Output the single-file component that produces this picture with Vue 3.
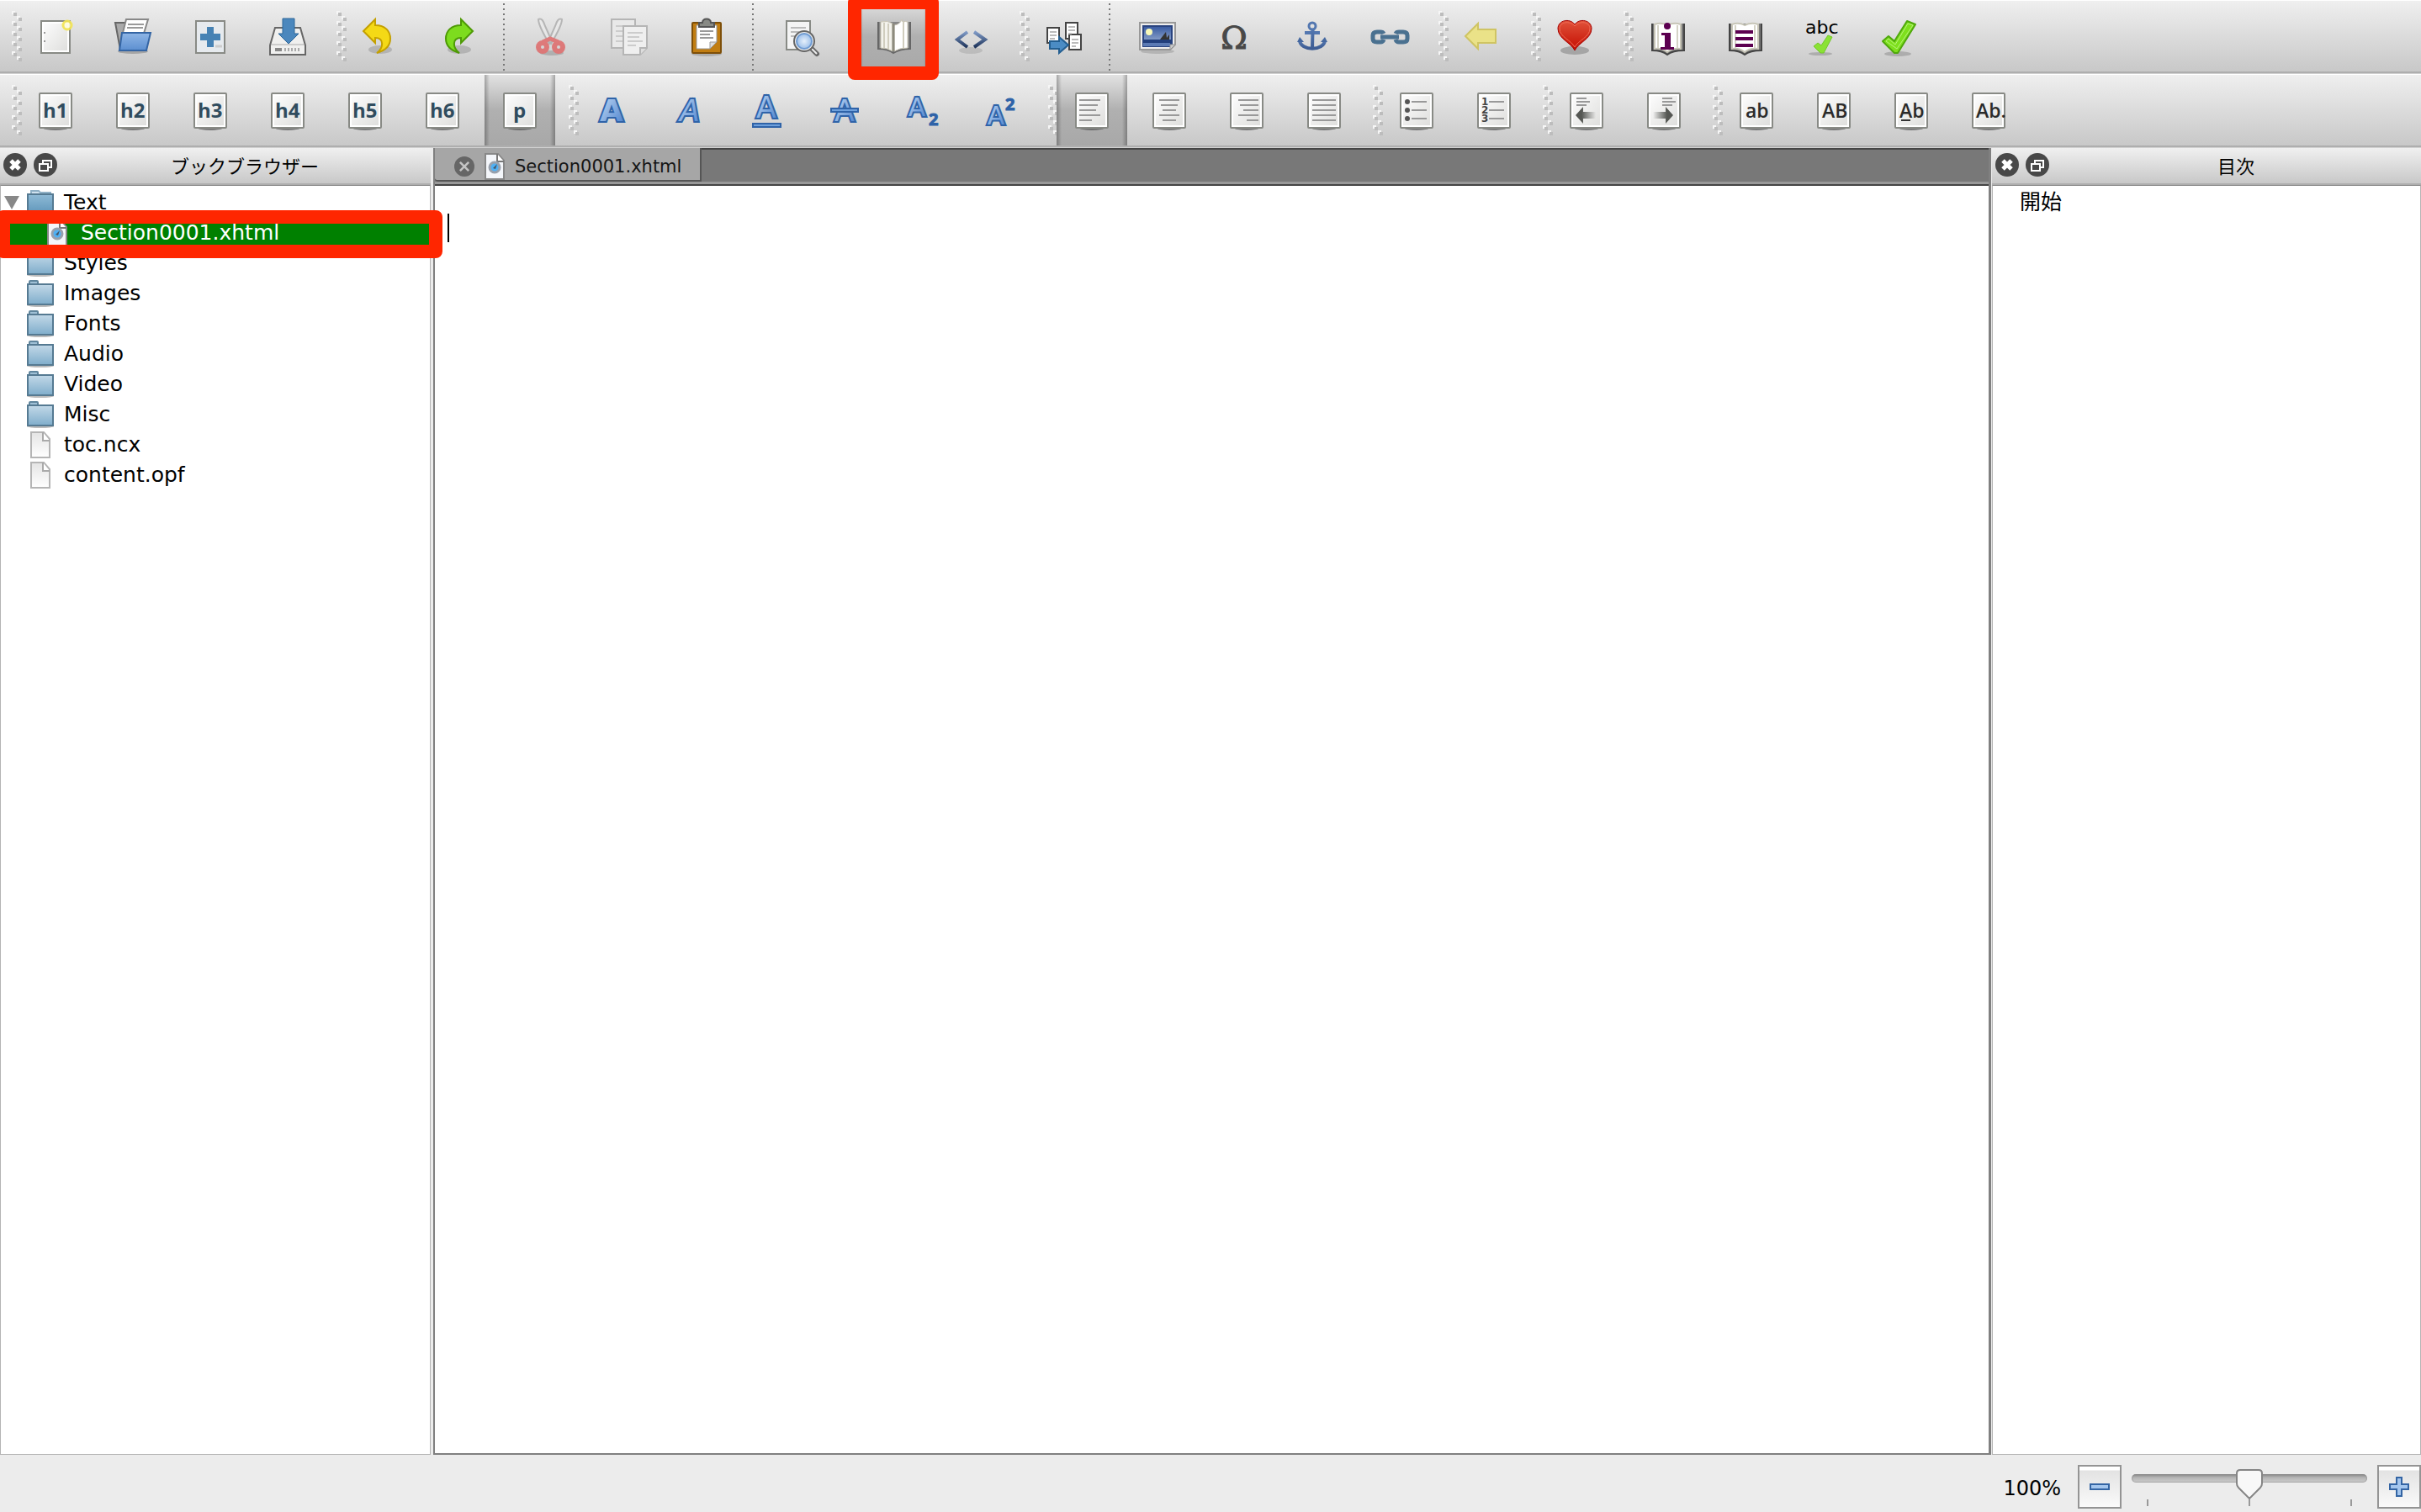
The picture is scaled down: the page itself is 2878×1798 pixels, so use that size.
<script setup>
import { ref } from 'vue'

const zoom = ref(50)

const page = '<ellipse cx="24" cy="44" rx="15" ry="3" fill="#555" opacity=".7"/><rect x="5" y="3" width="38" height="41" rx="1" fill="#fff" stroke="#888a85" stroke-width="2"/><rect x="8" y="6" width="32" height="35" fill="url(#paper)"/>'
const heading = (t, x) => `${page}<text x="${x}" y="32" class="h">${t}</text>`
const lines = (list) => list.map(([x, y, w]) => `<rect x="${x}" y="${y}" width="${w}" height="2" fill="#999"/>`).join('')
const caseMark = (t, x) => `${page}<text x="${x}" y="32" class="c">${t}</text>`
const letter = (x, y, s, extra = '') => `<text x="${x}" y="${y}" font-size="${s}" class="a" ${extra}>A</text>`
const tick = 'M4 29l7-6 7 6L33 5l10 4L22 43h-4z'
const book = '<path d="M6 8v32q12 0 18 5q6-5 20-5V8" fill="#777" stroke="#444" stroke-width="2"/><path d="M9 9q8-3 15 1q8-4 16-1v29q-10-1-16 4q-6-5-15-4z" fill="#fff" stroke="#c8c6b8" stroke-width="2"/><path d="M13 10v27M36 10v27" stroke="#d5d3c6" stroke-width="2"/>'

const icons = {
  new: '<rect x="7" y="5" width="34" height="38" fill="#fff" stroke="#888a85" stroke-width="2"/><rect x="10" y="8" width="28" height="32" fill="url(#paper)"/><path d="M10 19h2M10 29h2" stroke="#999" stroke-width="2"/><circle cx="38" cy="10" r="5" fill="#fffde0" stroke="#f3e552" stroke-width="3" opacity=".9"/>',
  open: '<ellipse cx="24" cy="41" rx="18" ry="3" fill="#777" opacity=".5"/><path d="M3 7h12v32H9z" fill="#aaa" stroke="#666" stroke-width="2"/><path d="M16 3h26l-6 20H11z" fill="#fff" stroke="#888" stroke-width="2"/><path d="M18 9h19M17 13h19" stroke="#999" stroke-width="2"/><path d="M11 19h34l-5 21H8z" fill="url(#blue)" stroke="#3465a4" stroke-width="2"/>',
  add: '<rect x="7" y="5" width="34" height="38" fill="#e6eaee" stroke="#888a85" stroke-width="2"/><path d="M30 35h8" stroke="#ccc" stroke-width="3"/><path d="M20 12h8v8h8v8h-8v8h-8v-8h-8v-8h8z" fill="#4682b4"/>',
  save: '<path d="M9 13h30l6 21v11H3V34z" fill="#f0f0ef" stroke="#666" stroke-width="2"/><path d="M4 33h40" stroke="#aaa" stroke-width="1"/><path d="M9 39h8" stroke="#888" stroke-width="4"/><path d="M20 39h20" stroke="#aaa" stroke-width="4" stroke-dasharray="2 2"/><path d="M18 2h14v18h5L25 32 13 20h5z" fill="#4b87bd" stroke="#2d6699" stroke-width="1"/>',
  undo: '<ellipse cx="24" cy="39" rx="14" ry="5" fill="#777" opacity=".35"/><path d="M4 17L18 3v7c12 0 18 7 18 16 0 8-6 14-16 17 8-6 9-18-2-18v6z" fill="#f4d916" stroke="#c4a000" stroke-width="2"/>',
  redo: '<ellipse cx="26" cy="39" rx="14" ry="5" fill="#777" opacity=".35"/><path d="M42 17L28 3v7c-12 0-18 7-18 16 0 8 6 14 16 17-8-6-9-18 2-18v6z" fill="#7ddc1e" stroke="#4e9a06" stroke-width="2"/>',
  cut: '<g opacity=".6"><ellipse cx="24" cy="43" rx="14" ry="3" fill="#999"/><path d="M8 3c4-2 6 2 8 8l8 18-3 3C15 22 8 10 8 3zM36 3c-4-2-6 2-8 8l-8 18 3 3C29 22 36 10 36 3z" fill="#eee" stroke="#999" stroke-width="2"/><ellipse cx="13" cy="36" rx="5" ry="5" fill="none" stroke="#e23c3c" stroke-width="6"/><ellipse cx="32" cy="36" rx="5" ry="5" fill="none" stroke="#e23c3c" stroke-width="6"/><path d="M13 30l9-4 10 4" fill="none" stroke="#e23c3c" stroke-width="5"/></g>',
  copy: '<g stroke="#b5b5b5" stroke-width="2" fill="#e9e9e9"><path d="M3 3h28v34H3z"/><path d="M8 11h14M8 17h8M8 23h8M8 29h8" stroke="#ccc"/><path d="M17 11h28v26l-8 8H17z" fill="#efefef"/><path d="M45 37h-8v8" fill="#ddd"/><path d="M22 19h18M22 24h14M22 29h18M22 34h10" stroke="#ccc"/></g>',
  paste: '<ellipse cx="24" cy="44" rx="18" ry="3" fill="#777" opacity=".4"/><rect x="7" y="7" width="34" height="36" rx="1" fill="#c17d11" stroke="#7e4f08" stroke-width="2"/><path d="M12 10h24v20l-8 8H12z" fill="#fff" stroke="#999"/><path d="M36 30l-8 0v8z" fill="#ddd" stroke="#999"/><path d="M16 17h16M16 21h12M16 25h16" stroke="#999" stroke-width="2"/><path d="M15 12V7h4c0-6 10-6 10 0h4v5z" fill="#888a85" stroke="#555" stroke-width="2"/>',
  find: '<path d="M7 5h28v34H7z" fill="#f4f4f4" stroke="#888a85" stroke-width="2"/><path d="M12 13h18M12 18h10M12 23h6" stroke="#bbb" stroke-width="2"/><path d="M36 37l7 7" stroke="#666" stroke-width="6" stroke-linecap="round"/><path d="M37 38l6 6" stroke="#eee" stroke-width="2"/><circle cx="28" cy="29" r="12" fill="#eee" stroke="#666" stroke-width="2"/><circle cx="28" cy="29" r="9" fill="url(#lens)" stroke="#6f9bd2" stroke-width="2"/>',
  book: '<path d="M6 6v32q12 0 18 5q8-5 20-5V6" fill="#888" stroke="#666" stroke-width="2"/><path d="M9 6q8-2 14 2v33q-6-4-14-4z" fill="#f4f3ed" stroke="#c8c4b4"/><path d="M25 41V10q7-1 9-7l1 3q4-1 6 0v31q-10 0-16 4z" fill="#fff" stroke="#c8c4b4"/><path d="M24 8v33" stroke="#8d8b7e" stroke-width="3"/><path d="M13 7v30M18 8v31" stroke="#d0cdbe" stroke-width="2"/><path d="M36 6v31" stroke="#d0cdbe" stroke-width="2"/>',
  code: '<ellipse cx="24" cy="40" rx="14" ry="4" fill="#888" opacity=".3"/><path d="M20 18L8 27l12 9M28 18l13 9-13 9" fill="none" stroke="url(#navy)" stroke-width="4"/>',
  split: '<g fill="#fff" stroke="#444" stroke-width="2"><path d="M5 13h14v18H5z"/><path d="M27 7h14v19H27z"/><path d="M31 21h14v18H31z"/></g><path d="M8 18h8M8 22h8M8 26h6M30 12h8M30 16h8M30 20h4M34 27h8M34 31h8M34 35h5" stroke="#bbb" stroke-width="2"/><path d="M8 29h11v-5l11 9.500-11 9.500v-5H8z" fill="#4b8cc4" stroke="#245f91" stroke-width="2"/>',
  image: '<ellipse cx="24" cy="41" rx="20" ry="3" fill="#888" opacity=".4"/><path d="M3 7h42v26l-6 6H3z" fill="#eee" stroke="#999" stroke-width="2"/><path d="M7 11h34v24H7z" fill="url(#sky)" stroke="#2a4480" stroke-width="2"/><path d="M7 27h34v8H7z" fill="#223f7c"/><path d="M7 31h32v4H7z" fill="#5b7ab4"/><path d="M27 27l7-9 1 7 3-4v6z" fill="#333"/><circle cx="14" cy="18" r="4" fill="#f8f8b8"/><path d="M45 33h-6v6z" fill="#ccc" stroke="#999"/>',
  omega: '<text x="23" y="38" font-size="38" text-anchor="middle" font-family="DejaVu Serif, serif" fill="#484848" stroke="#484848">Ω</text>',
  anchor: '<g fill="none" stroke="url(#steel)" stroke-width="4"><circle cx="24" cy="11" r="4" stroke="#5377b0" stroke-width="3"/><path d="M15 19h18" stroke="#5377b0"/><path d="M24.500 15l-.5 23"/><path d="M9 28c1 13 29 13 30 0"/></g><path d="M6 30l3-6 5 6zM34 30l5-6 3 6z" fill="#4568a0"/>',
  link: '<g fill="none" stroke="#4a7190" stroke-width="5"><path d="M17 20q-1-2-4-2H9q-5 0-5 4v4q0 4 5 4h4q3 0 4-3M31 20q1-2 4-2h5q5 0 5 4v4q0 4-5 4h-5q-3 0-4-3"/><path d="M13 24h22" stroke-width="5"/></g>',
  back: '<path d="M4 23L19 8v7h21v16H19v7z" fill="#eae288" stroke="#cfc463" stroke-width="2"/>',
  heart: '<ellipse cx="24" cy="40" rx="17" ry="5" fill="#777" opacity=".5"/><path d="M24 40C20 31 4 26 4 14 4 4 18 1 24 9 30 1 44 4 44 14c0 12-16 17-20 26z" fill="url(#red)" stroke="#a40000" stroke-width="1"/><path d="M24 36C20 28 6 24 6 14 6 6 18 4 24 11 30 4 42 6 42 14c0 10-14 14-18 22z" fill="none" stroke="#f06a55" stroke-width="1"/>',
  info: book + '<path d="M17 19h11v17h4v3H16v-3h5V22h-4z" fill="#5c0050"/><circle cx="24" cy="11" r="4" fill="#5c0050"/>',
  toc: book + '<path d="M13 18h21M13 26h21M13 34h21" stroke="#5c0050" stroke-width="4"/>',
  spell: '<ellipse cx="22" cy="44" rx="14" ry="2" fill="#888" opacity=".5"/><text x="4" y="20" font-size="22" font-family="DejaVu Sans, sans-serif" fill="#000">abc</text><path d="M14 35l5-4 4 3 8-12 5 2-10 19h-4z" fill="#8ae234" stroke="#73c62c"/>',
  valid: `<ellipse cx="22" cy="44" rx="16" ry="3" fill="#888" opacity=".5"/><path d="${tick}" fill="#7ee01c" stroke="#4fa80c" stroke-width="2" stroke-linejoin="round"/><path d="M8 29l3-3 8 7L34 8l6 2L21 38z" fill="none" stroke="#b6f27a" stroke-width="1"/>`,
  h1: heading('h1', 9), h2: heading('h2', 9), h3: heading('h3', 9),
  h4: heading('h4', 9), h5: heading('h5', 9), h6: heading('h6', 9), p: heading('p', 16),
  bold: letter(23, 36, 36, 'font-weight="bold"'),
  italic: letter(24, 36, 35, 'font-style="italic"'),
  underline: letter(23, 32, 35) + '<rect x="7" y="39" width="33" height="4" fill="#6ea0dc" stroke="#2f63a8" stroke-width="2"/>',
  strike: letter(24, 36, 35) + '<rect x="8" y="21" width="32" height="4" fill="#6ea0dc" stroke="#2f63a8" stroke-width="2"/>',
  sub: letter(18, 30, 30) + '<text x="32" y="41" class="n">2</text>',
  sup: letter(20, 40, 30) + '<text x="31" y="23" class="n">2</text>',
  left: page + lines([[9, 10, 25], [9, 16, 22], [9, 22, 20], [9, 28, 25], [9, 34, 15]]),
  center: page + lines([[12, 10, 24], [14, 16, 20], [16, 22, 16], [12, 28, 24], [16, 34, 16]]),
  right: page + lines([[14, 10, 24], [16, 16, 22], [20, 22, 18], [14, 28, 24], [24, 34, 14]]),
  justify: page + lines([[10, 10, 28], [10, 16, 28], [10, 22, 28], [10, 28, 28], [10, 34, 28]]),
  bullets: page + lines([[18, 12, 18], [18, 22, 18], [18, 32, 18]]) + '<g fill="#555"><circle cx="13" cy="13" r="3"/><circle cx="13" cy="23" r="3"/><circle cx="13" cy="33" r="3"/></g>',
  numbers: page + lines([[18, 12, 18], [18, 22, 18], [18, 32, 18]]) + '<g class="d"><text x="9" y="17">1</text><text x="9" y="27">2</text><text x="9" y="37">3</text></g>',
  outdent: page + lines([[12, 8, 12], [12, 12, 16], [12, 16, 12]]) + '<path d="M11 29l9-10v6h15v8H20v6z" fill="url(#fadeR)"/>',
  indent: page + lines([[22, 8, 12], [22, 12, 16], [22, 16, 12]]) + '<path d="M35 29l-9-10v6H11v8h15v6z" fill="url(#fadeL)"/>',
  lower: caseMark('ab', 11), upper: caseMark('AB', 10),
  title: caseMark('Ab', 10) + '<path d="M12 35h11" stroke="#333" stroke-width="2"/>',
  sentence: caseMark('Ab.', 9),
}

const mainBar = [
  [['new', '新規'], ['open', '開く'], ['add', '追加'], ['save', '保存']],
  [['undo', '元に戻す'], ['redo', 'やり直す'], null, ['cut', '切り取り'], ['copy', 'コピー'], ['paste', '貼り付け'], null, ['find', '検索']],
  [['book', 'ブックビュー', 'pressed marked'], ['code', 'コードビュー']],
  [['split', '分割'], null, ['image', '画像'], ['omega', '特殊文字'], ['anchor', 'アンカー'], ['link', 'リンク']],
  [['back', '戻る']],
  [['heart', '寄付']],
  [['info', 'メタデータ'], ['toc', '目次生成'], ['spell', 'スペルチェック'], ['valid', '検証']],
]
const formatBar = [
  [...['h1', 'h2', 'h3', 'h4', 'h5', 'h6'].map((h) => [h, h]), ['p', 'p', 'pressed']],
  [['bold', '太字'], ['italic', '斜体'], ['underline', '下線'], ['strike', '取り消し線'], ['sub', '下付き'], ['sup', '上付き']],
  [['left', '左揃え', 'pressed'], ['center', '中央揃え'], ['right', '右揃え'], ['justify', '両端揃え']],
  [['bullets', '箇条書き'], ['numbers', '番号付き']],
  [['outdent', 'インデント解除'], ['indent', 'インデント']],
  [['lower', '小文字'], ['upper', '大文字'], ['title', 'タイトル'], ['sentence', '文頭']],
]

const folder = '<ellipse cx="16" cy="30" rx="16" ry="2" fill="#bbb"/><path d="M3 6V2q0-1 1-1h8q1 0 1 1v3" fill="#9fc0d6" stroke="#5f859d" stroke-width="2"/><rect x="1" y="5" width="30" height="24" fill="url(#folder)" stroke="#557a92" stroke-width="2"/>'
const folderOpen = '<path d="M5 7V2h9l2 2h12v3" fill="#cfe1ee" stroke="#8fb0c6" stroke-width="2"/><rect x="1" y="6" width="30" height="23" fill="url(#folderDark)" stroke="#557a92" stroke-width="2"/>'
const file = '<path d="M5 1h15l7 8v22H5z" fill="url(#sheet)" stroke="#b5b5b5" stroke-width="2"/><path d="M19 1v10h8" fill="#fff" stroke="#aaa" stroke-width="2"/>'
const web = '<path d="M5 1h15l7 8v22H5z" fill="#f4f6fa" stroke="#888" stroke-width="2"/><path d="M19 1v9h8" fill="#fff" stroke="#777" stroke-width="2"/><circle cx="16" cy="17" r="6" fill="#4fb0f4" stroke="#98a0ac" stroke-width="3"/><path d="M14 18l5-5-2 6z" fill="#456"/>'

const tree = [
  { name: 'Text', icon: folderOpen, kind: 'parent' },
  { name: 'Section0001.xhtml', icon: web, kind: 'selected' },
  ...['Styles', 'Images', 'Fonts', 'Audio', 'Video', 'Misc'].map((name) => ({ name, icon: folder })),
  { name: 'toc.ncx', icon: file },
  { name: 'content.opf', icon: file },
]
</script>

<template>
  <div class="app">
    <svg class="defs" width="0" height="0" aria-hidden="true">
      <linearGradient id="paper" x2="1" y2="1"><stop stop-color="#fcfcfc" /><stop offset="1" stop-color="#dfdfdd" /></linearGradient>
      <linearGradient id="blue" x2="0" y2="1"><stop stop-color="#8fb6e6" /><stop offset="1" stop-color="#5c8fd0" /></linearGradient>
      <linearGradient id="glyph" x2="1" y2="1"><stop stop-color="#c4dbf5" /><stop offset="1" stop-color="#4a80cc" /></linearGradient>
      <linearGradient id="navy" x2="0" y2="1"><stop stop-color="#7f9ac6" /><stop offset="1" stop-color="#1f355c" /></linearGradient>
      <linearGradient id="steel" x2="0" y2="1"><stop stop-color="#5377b0" /><stop offset="1" stop-color="#3c5b92" /></linearGradient>
      <linearGradient id="sky" x2="0" y2="1"><stop stop-color="#3558a0" /><stop offset="1" stop-color="#a9bbd8" /></linearGradient>
      <linearGradient id="red" x2="0" y2="1"><stop stop-color="#e0523a" /><stop offset="1" stop-color="#c40c00" /></linearGradient>
      <radialGradient id="lens"><stop stop-color="#e6f0fb" /><stop offset="1" stop-color="#9dc0ea" /></radialGradient>
      <linearGradient id="fadeR"><stop offset=".3" stop-color="#555753" /><stop offset="1" stop-color="#555753" stop-opacity="0" /></linearGradient>
      <linearGradient id="fadeL"><stop stop-color="#555753" stop-opacity="0" /><stop offset=".7" stop-color="#555753" /></linearGradient>
      <linearGradient id="folder" x2="0" y2="1"><stop stop-color="#c3d9e8" /><stop offset="1" stop-color="#7fadcb" /></linearGradient>
      <linearGradient id="folderDark" x2="0" y2="1"><stop stop-color="#8fbad6" /><stop offset="1" stop-color="#5f96ba" /></linearGradient>
      <linearGradient id="sheet" x2="0" y2="1"><stop stop-color="#e4e4e4" /><stop offset="1" stop-color="#fff" /></linearGradient>
    </svg>

    <div v-for="(bar, b) in [mainBar, formatBar]" :key="b" class="toolbar" role="toolbar">
      <div v-for="(group, g) in bar" :key="g" class="group">
        <svg class="grip" width="12" height="60" aria-hidden="true">
          <template v-for="n in 5" :key="n">
            <rect x="0" :y="n * 12 - 12" width="4" height="4" fill="#f6f6f6" /><rect x="2" :y="n * 12 - 10" width="4" height="4" fill="#bdbdbd" />
            <rect x="6" :y="n * 12 - 6" width="4" height="4" fill="#f6f6f6" /><rect x="8" :y="n * 12 - 4" width="4" height="4" fill="#bdbdbd" />
          </template>
        </svg>
        <div class="tools">
          <template v-for="(tool, t) in group" :key="t">
            <button v-if="tool" type="button" class="tool" :class="tool[2]" :aria-label="tool[1]">
              <svg class="icon" viewBox="0 0 48 48" v-html="icons[tool[0]]"></svg>
            </button>
            <span v-else class="divider"></span>
          </template>
        </div>
      </div>
    </div>

    <main class="workspace">
      <section class="dock browser">
        <header class="dock-head">
          <button type="button" class="round" aria-label="閉じる"><svg viewBox="0 0 28 28"><circle cx="14" cy="14" r="14" /><path d="M9 9l10 10M19 9L9 19" stroke-width="5" /></svg></button>
          <button type="button" class="round" aria-label="切り離す"><svg viewBox="0 0 28 28"><circle cx="14" cy="14" r="14" /><path d="M7 13h10v8H7zM11 12V9h10v8h-3" stroke-width="2" /></svg></button>
          <h2>ブックブラウザー</h2>
        </header>
        <ul class="tree">
          <li v-for="row in tree" :key="row.name" :class="row.kind">
            <svg v-if="row.kind === 'parent'" class="arrow" viewBox="0 0 18 16"><path d="M0 0h18L9 16z" fill="#888" /></svg>
            <svg class="node" viewBox="0 0 32 32" v-html="row.icon"></svg>
            <span>{{ row.name }}</span>
          </li>
        </ul>
      </section>

      <section class="editor">
        <div class="tabs" role="tablist">
          <div class="tab" role="tab" aria-selected="true">
            <button type="button" class="round close" aria-label="タブを閉じる"><svg viewBox="0 0 28 28"><circle cx="14" cy="14" r="14" /><path d="M8 8l12 12M20 8L8 20" stroke-width="3" /></svg></button>
            <svg class="node" viewBox="0 0 32 32" v-html="web"></svg>
            <span>Section0001.xhtml</span>
          </div>
        </div>
        <div class="page"><span class="caret"></span></div>
      </section>

      <section class="dock toc">
        <header class="dock-head">
          <button type="button" class="round" aria-label="閉じる"><svg viewBox="0 0 28 28"><circle cx="14" cy="14" r="14" /><path d="M9 9l10 10M19 9L9 19" stroke-width="5" /></svg></button>
          <button type="button" class="round" aria-label="切り離す"><svg viewBox="0 0 28 28"><circle cx="14" cy="14" r="14" /><path d="M7 13h10v8H7zM11 12V9h10v8h-3" stroke-width="2" /></svg></button>
          <h2>目次</h2>
        </header>
        <ul class="tree"><li><span>開始</span></li></ul>
      </section>
    </main>

    <footer class="status">
      <label for="zoom">100%</label>
      <button type="button" class="step" aria-label="縮小"><svg viewBox="0 0 24 24"><path d="M1 9h22v6H1z" /></svg></button>
      <div class="slider">
        <input id="zoom" v-model="zoom" type="range" min="0" max="100" />
        <div class="ticks"><i></i><i></i><i></i></div>
      </div>
      <button type="button" class="step" aria-label="拡大"><svg viewBox="0 0 24 24"><path d="M9 1h6v8h8v6h-8v8H9v-8H1V9h8z" /></svg></button>
    </footer>
  </div>
</template>

<style>
body { margin: 0; }
.icon .h { font: bold 24px "Open Sans", sans-serif; fill: #304c5e; }
.icon .c { font: 600 23px "Open Sans", sans-serif; fill: #2b2b2b; }
.icon .a {
  font-family: "DejaVu Sans", sans-serif;
  text-anchor: middle;
  fill: url(#glyph);
  stroke: #2f63a8;
  stroke-width: 4px;
  paint-order: stroke;
}
.icon .n { font: bold 20px "Open Sans", sans-serif; fill: #2f63a8; stroke: #2f63a8; }
.icon .d { font: bold 12px "DejaVu Sans", sans-serif; fill: #444; }
</style>

<style scoped>
.app {
  display: flex;
  flex-direction: column;
  height: 100vh;
  overflow: hidden;
  background: #ececec;
  color: #000;
  font: 25px "DejaVu Sans", "Noto Sans CJK JP", sans-serif;
}
.defs { position: absolute; }
button { padding: 0; border: 0; background: none; }
svg { display: block; flex: none; }

.toolbar {
  display: flex;
  gap: 16px;
  height: 84px;
  padding-left: 14px;
  border-top: 1px solid #fff;
  border-bottom: 2px solid #aeaeae;
  box-shadow: 0 1px #d0d0d0;
  margin-bottom: 1px;
  background: linear-gradient(#efefef, #c8c8c8);
}
.group { display: flex; }
.grip { width: 12px; margin: 12px -2px 0 0; }
.tools { display: flex; gap: 8px; }
.tool {
  position: relative;
  display: flex;
  align-items: center;
  justify-content: center;
  width: 84px;
  padding-top: 2px;
}
.icon { width: 48px; height: 48px; overflow: visible; }
.pressed {
  background:
    linear-gradient(90deg, #0004, #0000 6px, #0000 78px, #0004),
    linear-gradient(#e2e2e2, #b0b0b0 50%, #a8a8a8);
}
.marked::after {
  content: "";
  position: absolute;
  inset: -6px -12px -10px;
  z-index: 3;
  border: 16px solid #ff2600;
  border-radius: 8px;
}
.divider {
  width: 2px;
  margin: 3px 6px 0 4px;
  background: repeating-linear-gradient(#777 0 2px, #0000 2px 6px);
}

.workspace { display: flex; flex: 1; min-height: 0; }
.dock { display: flex; flex: none; flex-direction: column; width: 512px; }
.dock-head {
  display: flex;
  align-items: center;
  gap: 8px;
  height: 42px;
  padding: 0 6px 0 4px;
  border-bottom: 2px solid #aeaeae;
  background: linear-gradient(#f0f0f0, #c8c8c8);
}
.dock-head h2 { flex: 1; margin: 0; padding-top: 3px; font-size: 22px; font-weight: 400; line-height: 28px; text-align: center; }
.round svg { width: 28px; height: 28px; fill: #484848; stroke-width: 0; margin-bottom: 2px; }
.round path { fill: none; stroke: #fff; }
.tree {
  flex: 1;
  margin: 0;
  padding: 2px 0 0;
  list-style: none;
  background: #fff;
  border: 1px solid #b4b4b4;
  border-top-color: #888;
}
.tree li {
  position: relative;
  display: flex;
  align-items: center;
  height: 36px;
  padding-left: 31px;
  gap: 12px;
  line-height: 36px;
}
.tree .parent { padding-left: 4px; }
.arrow { width: 18px; height: 16px; margin-right: -3px; }
.node { width: 32px; height: 32px; }
.tree .selected { padding-left: 51px; color: #fff; background: #008000; }
.selected::after {
  content: "";
  position: absolute;
  inset: -9px -15px -12px -5px;
  z-index: 3;
  border: 16px solid #ff2600;
  border-radius: 8px;
}
.toc { width: 510px; }
.toc .tree li { padding-left: 32px; }

.editor {
  display: flex;
  flex: 1;
  flex-direction: column;
  margin: 0 1px 0 3px;
  border: solid #808080;
  border-width: 0 3px 2px 2px;
}
.tabs {
  display: flex;
  height: 39px;
  border-top: 2px solid #444;
  border-bottom: 2px solid #444;
  padding-bottom: 2px;
  background: linear-gradient(#787878 38px, #999 38px);
}
.tab {
  display: flex;
  align-items: center;
  height: 33px;
  margin-top: -2px;
  padding: 5px 22px 0 23px;
  border-right: 2px solid #555;
  border-bottom: 2px solid #555;
  border-bottom-left-radius: 4px;
  background: #a6a6a6;
  color: #151515;
  font-size: 21px;
  line-height: 32px;
}
.tab .node { margin: 0 8px; }
.close svg { width: 24px; height: 24px; margin: 0; fill: #666; }
.close path { stroke: #c4c4c4; }
.page { flex: 1; padding: 33px 15px; background: #fff; }
.caret { display: block; width: 2px; height: 34px; background: #000; }

.status { display: flex; justify-content: flex-end; align-items: flex-start; gap: 12px; height: 56px; padding-top: 12px; }
.status label { margin-right: 8px; font-size: 24px; line-height: 56px; }
.step {
  display: flex;
  align-items: center;
  justify-content: center;
  width: 52px;
  height: 52px;
  border: 2px solid #949494;
  background: linear-gradient(#fff 4px, #e3e3e3 5px, #fafafa);
}
.step svg { width: 24px; height: 24px; fill: #a4c6ee; stroke: #3465a4; stroke-width: 2; }
.slider { width: 280px; padding-top: 5px; }
.slider input {
  display: block;
  width: 100%;
  height: 36px;
  margin: 0;
  appearance: none;
  background: none;
}
.slider input::-webkit-slider-runnable-track {
  height: 10px;
  border-radius: 5px;
  background: linear-gradient(#848484, #b4b4b4 40%, #cdcdcd);
  box-shadow: inset 0 0 1px 1px #8888;
  margin-top: -14px;
}
.slider input::-webkit-slider-thumb {
  appearance: none;
  width: 32px;
  height: 36px;
  margin-top: -6px;
  background: url("data:image/svg+xml,%3Csvg xmlns='http://www.w3.org/2000/svg' viewBox='0 0 32 36'%3E%3Cpath d='M5 1h22q4 0 4 4v12q0 3-2 5L16 35 3 22q-2-2-2-5V5q0-4 4-4z' fill='%23f8f8f8' stroke='%23858585' stroke-width='2'/%3E%3C/svg%3E");
}
.ticks { display: flex; justify-content: space-between; padding: 0 18px; }
.ticks i { width: 2px; height: 8px; background: #999; }
</style>
